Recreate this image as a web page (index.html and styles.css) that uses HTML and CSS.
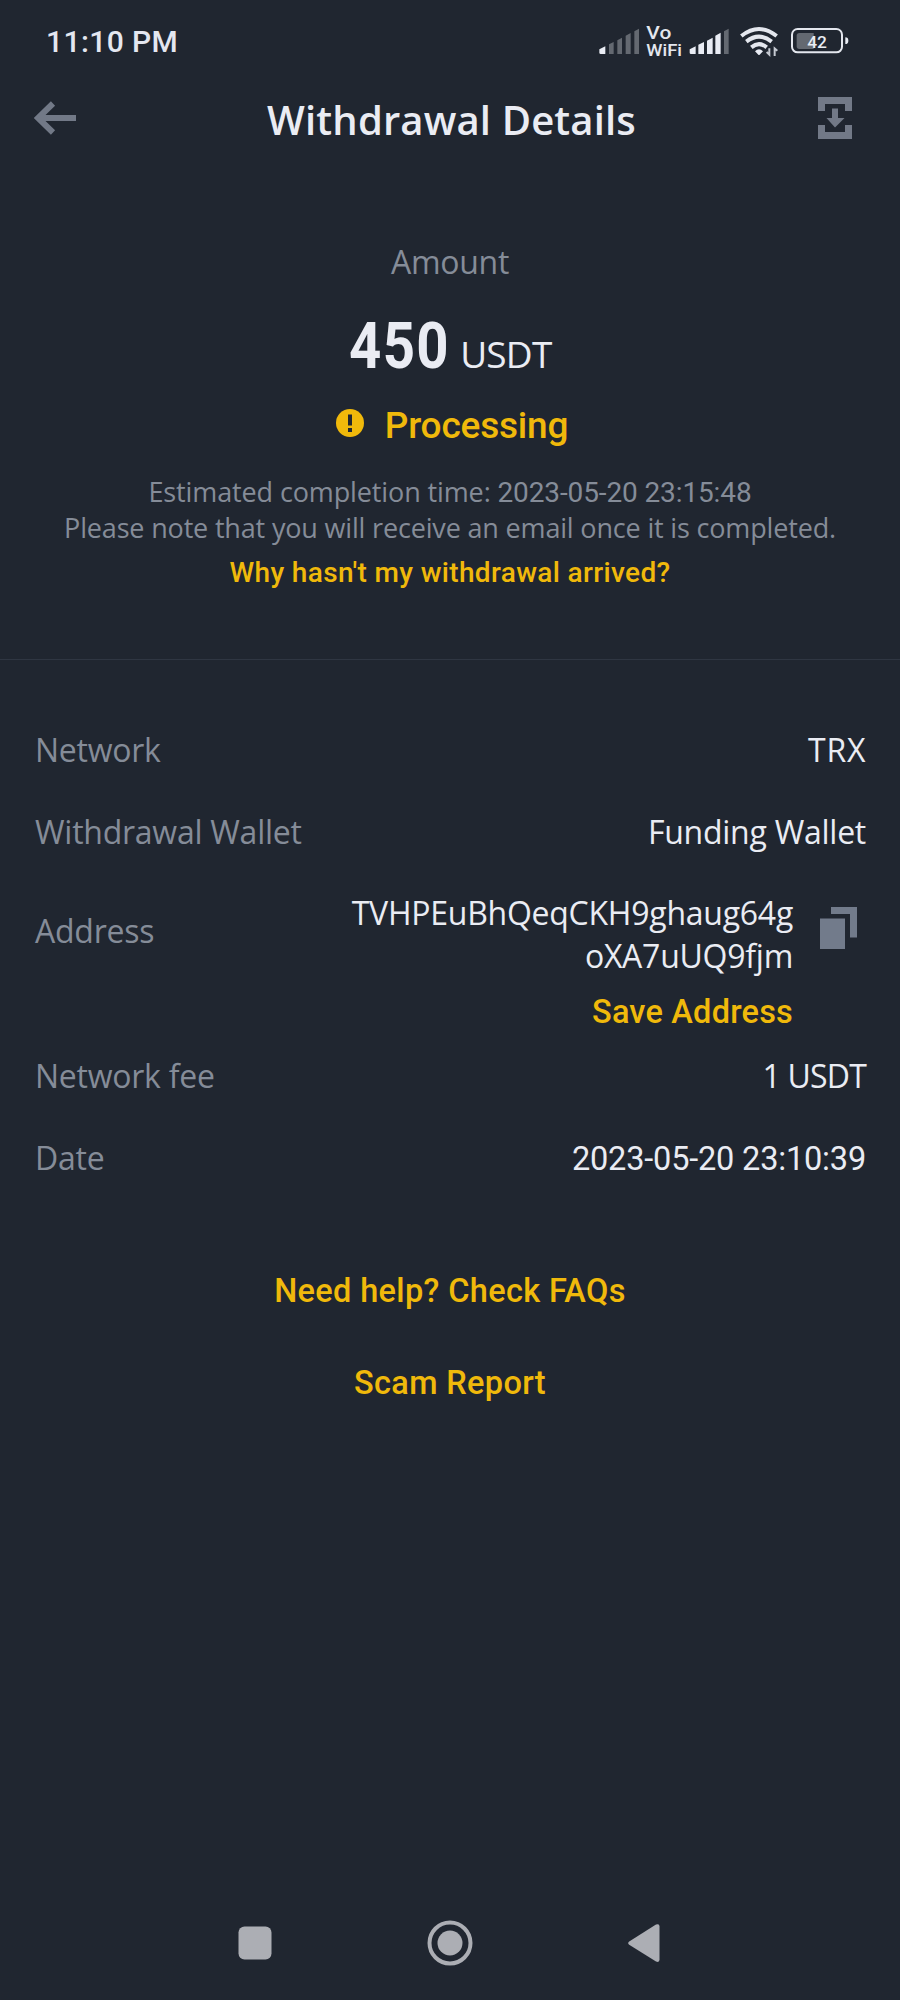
FILE: index.html
```
<!DOCTYPE html>
<html lang="en">
<head>
<meta charset="utf-8">
<title>Withdrawal Details</title>
<link rel="stylesheet" href="styles.css">
</head>
<body>
<div class="screen">
  <div class="status-bar">
    <span class="clock">11:10 PM</span>
    <svg class="status-icons" viewBox="0 0 810 180">
      <g class="light">
        <path d="M28 118l18-9v23H32q-4 0-4-4z"/>
        <path d="M299 118l18-9v23h-14q-4 0-4-4zM325 104l17-8v36h-17zM351 92l17-9v49h-17zM376 77l16-9v64h-16z"/>
      </g>
      <g class="dim">
        <path d="M57 103l14-7v36H57zM82 91l14-8v49H82zM107 77l15-8v63h-15zM133 64l14-8v76h-14zM402 64l14-8v76h-14z"/>
      </g>
      <text class="vo" x="169" y="87" textLength="75" lengthAdjust="spacingAndGlyphs">Vo</text>
      <text class="wifi" x="169" y="138" textLength="107" lengthAdjust="spacingAndGlyphs">WiFi</text>
      <g class="waves">
        <path d="M454 78Q507 36 560 78"/>
        <path d="M469 95Q507 65 545 95"/>
        <path d="M484 112Q507 93 530 112"/>
      </g>
      <path class="light" d="M495 124q12-13 24 0l-10 10q-2 2-4 0z"/>
      <path class="arrows" d="M530 126l8 8v-19M562 122l-8-7v23"/>
      <path class="dim" d="M628 69h43v48h-43q-8 0-8-8V77q0-8 8-8z"/>
      <rect class="cell" x="606" y="57" width="150" height="70" rx="17"/>
      <path class="light" d="M766 82q9 0 9 10t-9 10z"/>
      <text class="charge" x="681" y="113">42</text>
    </svg>
  </div>

  <header class="header">
    <svg class="back" viewBox="0 0 42 34"><path d="M19 2.500L4 17l15 14.500M4 17h38"/></svg>
    <h1 class="title">Withdrawal Details</h1>
    <svg class="save" viewBox="0 0 34 42">
      <path d="M0 0h34v14h-7V7H7v7H0zM0 28h7v7h20v-7h7v14H0z"/>
      <path d="M14 11.500h6V21h6.500L17 30.500 8.500 21H14z"/>
    </svg>
  </header>

  <section class="summary">
    <div class="caption">Amount</div>
    <div class="amount"><span class="value">450</span><span class="unit">USDT</span></div>
    <div class="state">
      <svg class="alert" viewBox="0 0 28 28"><circle cx="14" cy="14" r="14"/><path d="M12 5.500h4v11h-4zM12 19h4v4h-4z"/></svg>
      <span>Processing</span>
    </div>
    <p class="note">Estimated completion time: <span class="stamp">2023-05-20 23:15:48</span></p>
    <p class="note">Please note that you will receive an email once it is completed.</p>
    <a class="why">Why hasn't my withdrawal arrived?</a>
  </section>

  <section class="details">
    <div class="row"><span class="label">Network</span><span class="data ticker">TRX</span></div>
    <div class="row"><span class="label">Withdrawal Wallet</span><span class="data">Funding Wallet</span></div>
    <div class="address">
      <span class="label">Address</span>
      <div class="hash">
        <div class="data">TVHPEuBhQeqCKH9ghaug64g<br>oXA7uUQ9fjm</div>
        <a class="save-link">Save Address</a>
      </div>
      <svg class="copy" viewBox="0 0 37 42"><path d="M0 11.500h25V42H0zM11 0h26v30.500h-7V7H11z"/></svg>
    </div>
    <div class="row"><span class="label">Network fee</span><span class="data fee">1 USDT</span></div>
    <div class="row"><span class="label">Date</span><span class="data date">2023-05-20 23:10:39</span></div>
  </section>

  <div class="links">
    <a>Need help? Check FAQs</a>
    <a>Scam Report</a>
  </div>

  <nav class="nav">
    <svg class="nav-icon" viewBox="0 0 46 46"><rect x="6.500" y="6.500" width="33" height="33" rx="6"/></svg>
    <svg class="nav-icon" viewBox="0 0 46 46"><circle class="ring" cx="23" cy="23" r="20.500"/><circle cx="23" cy="23" r="12.500"/></svg>
    <svg class="nav-icon" viewBox="0 0 46 46"><path d="M8.200 21.500L35 4.600q3.500-1.500 3.500 2v33q0 3.500-3.500 2L8.200 24.800q-2-1.600 0-3.300z"/></svg>
  </nav>
</div>
</body>
</html>
```
FILE: styles.css
```
* { box-sizing: border-box; }
body {
  margin: 0;
  background: #202630;
  color: #eaecf3;
  font-family: "Open Sans", "Noto Sans", sans-serif;
}
.screen {
  width: 900px;
  height: 2000px;
  display: flex;
  flex-direction: column;
}
.status-bar {
  height: 82px;
  padding: 0 40px 0 46px;
  display: flex;
  justify-content: space-between;
  align-items: center;
}
.clock {
  font: 500 30px/40px Roboto, sans-serif;
  padding-top: 2px;
  letter-spacing: .4px;
  color: #e4e7f0;
}
.status-icons { width: 270px; height: 60px; margin-top: -2px; }
.light { fill: #e9ecf4; }
.dim { fill: #646971; }
.vo { font: 500 56px Roboto, sans-serif; fill: #e4e7ee; }
.wifi { font: 500 51px Roboto, sans-serif; fill: #e4e7ee; }
.charge { font: 500 52px Roboto, sans-serif; fill: #e9ecf4; text-anchor: middle; }
.waves { fill: none; stroke: #e4e7ee; stroke-width: 12; }
.arrows { fill: none; stroke: #c5c9d1; stroke-width: 6; }
.cell { fill: none; stroke: #e4e7ee; stroke-width: 6; }

.header {
  height: 75px;
  padding: 0 48px 0 34px;
  display: flex;
  justify-content: space-between;
  align-items: center;
}
.back { width: 42px; height: 34px; margin-top: -4px; }
.back path { fill: none; stroke: #727987; stroke-width: 6; }
.title { margin: 0; padding-left: 9px; font-size: 40px; font-weight: 600; line-height: 54px; letter-spacing: .15px; }
.save { width: 34px; height: 42px; margin-top: -3px; fill: #727987; }

.summary {
  height: 503px;
  padding-top: 85px;
  border-bottom: 1px solid #2f3642;
  display: flex;
  flex-direction: column;
  align-items: center;
}
.caption { font-size: 32px; line-height: 40px; letter-spacing: -.3px; color: #858c98; }
.amount {
  margin-top: 25px;
  height: 80px;
  line-height: 80px;
  display: flex;
  align-items: baseline;
  gap: 11px;
  font-family: Roboto, sans-serif;
}
.value {
  font-size: 64px;
  font-weight: 700;
  letter-spacing: 1.500px;
  margin-right: -14px;
  transform: scaleX(.88);
  transform-origin: left;
}
.unit { font: 400 37px/80px "Open Sans", sans-serif; letter-spacing: -.8px; }
.state {
  margin-top: 14px;
  padding-left: 4px;
  height: 50px;
  display: flex;
  gap: 21px;
  align-items: center;
  font: 500 37px/50px Roboto, sans-serif;
  letter-spacing: -.2px;
  color: #f0b90b;
}
.alert { width: 28px; height: 28px; margin-top: -7px; fill: #f0b90b; }
.alert path { fill: #202630; }
.note { margin: 0; font-size: 27px; line-height: 36px; letter-spacing: -.17px; color: #858c98; }
.state + .note { margin-top: 23px; letter-spacing: -.12px; }
.stamp { font-family: Roboto, sans-serif; font-size: 28px; line-height: 30px; }
.why {
  margin-top: 9px;
  font: 500 28px/36px Roboto, sans-serif;
  letter-spacing: .35px;
  color: #f0b90b;
}

.details {
  padding: 49px 34px 0 35px;
  font-size: 32px;
  line-height: 43px;
  letter-spacing: -.25px;
}
.row { height: 81.500px; padding-top: 19px; display: flex; justify-content: space-between; align-items: baseline; }
.label { color: #858c98; }
.data { text-align: right; }
.ticker { letter-spacing: .9px; margin-right: -.5px; }
.fee { letter-spacing: -.8px; }
.address { height: 163px; padding-top: 19px; display: flex; }
.address .label { padding-top: 18px; }
.hash { margin-left: auto; display: flex; flex-direction: column; align-items: flex-end; }
.save-link { margin-top: 14px; font: 500 32.500px/43px Roboto, sans-serif; letter-spacing: .2px; color: #f0b90b; }
.copy { width: 37px; height: 42px; margin: 16px 9px 0 27px; fill: #727b8b; }
.date { font-family: Roboto, sans-serif; font-size: 32.500px; letter-spacing: -.18px; }

.links {
  padding-top: 68px;
  display: flex;
  flex-direction: column;
  align-items: center;
  gap: 42px;
  font: 500 32.500px/50px Roboto, sans-serif;
  letter-spacing: .35px;
  color: #f0b90b;
}
.nav {
  margin-top: auto;
  height: 114px;
  padding: 0 233px 0 232px;
  display: flex;
  justify-content: space-between;
  align-items: center;
}
.nav-icon { width: 46px; height: 46px; fill: #acaeb4; }
.ring { fill: none; stroke: #acaeb4; stroke-width: 4; }
```
